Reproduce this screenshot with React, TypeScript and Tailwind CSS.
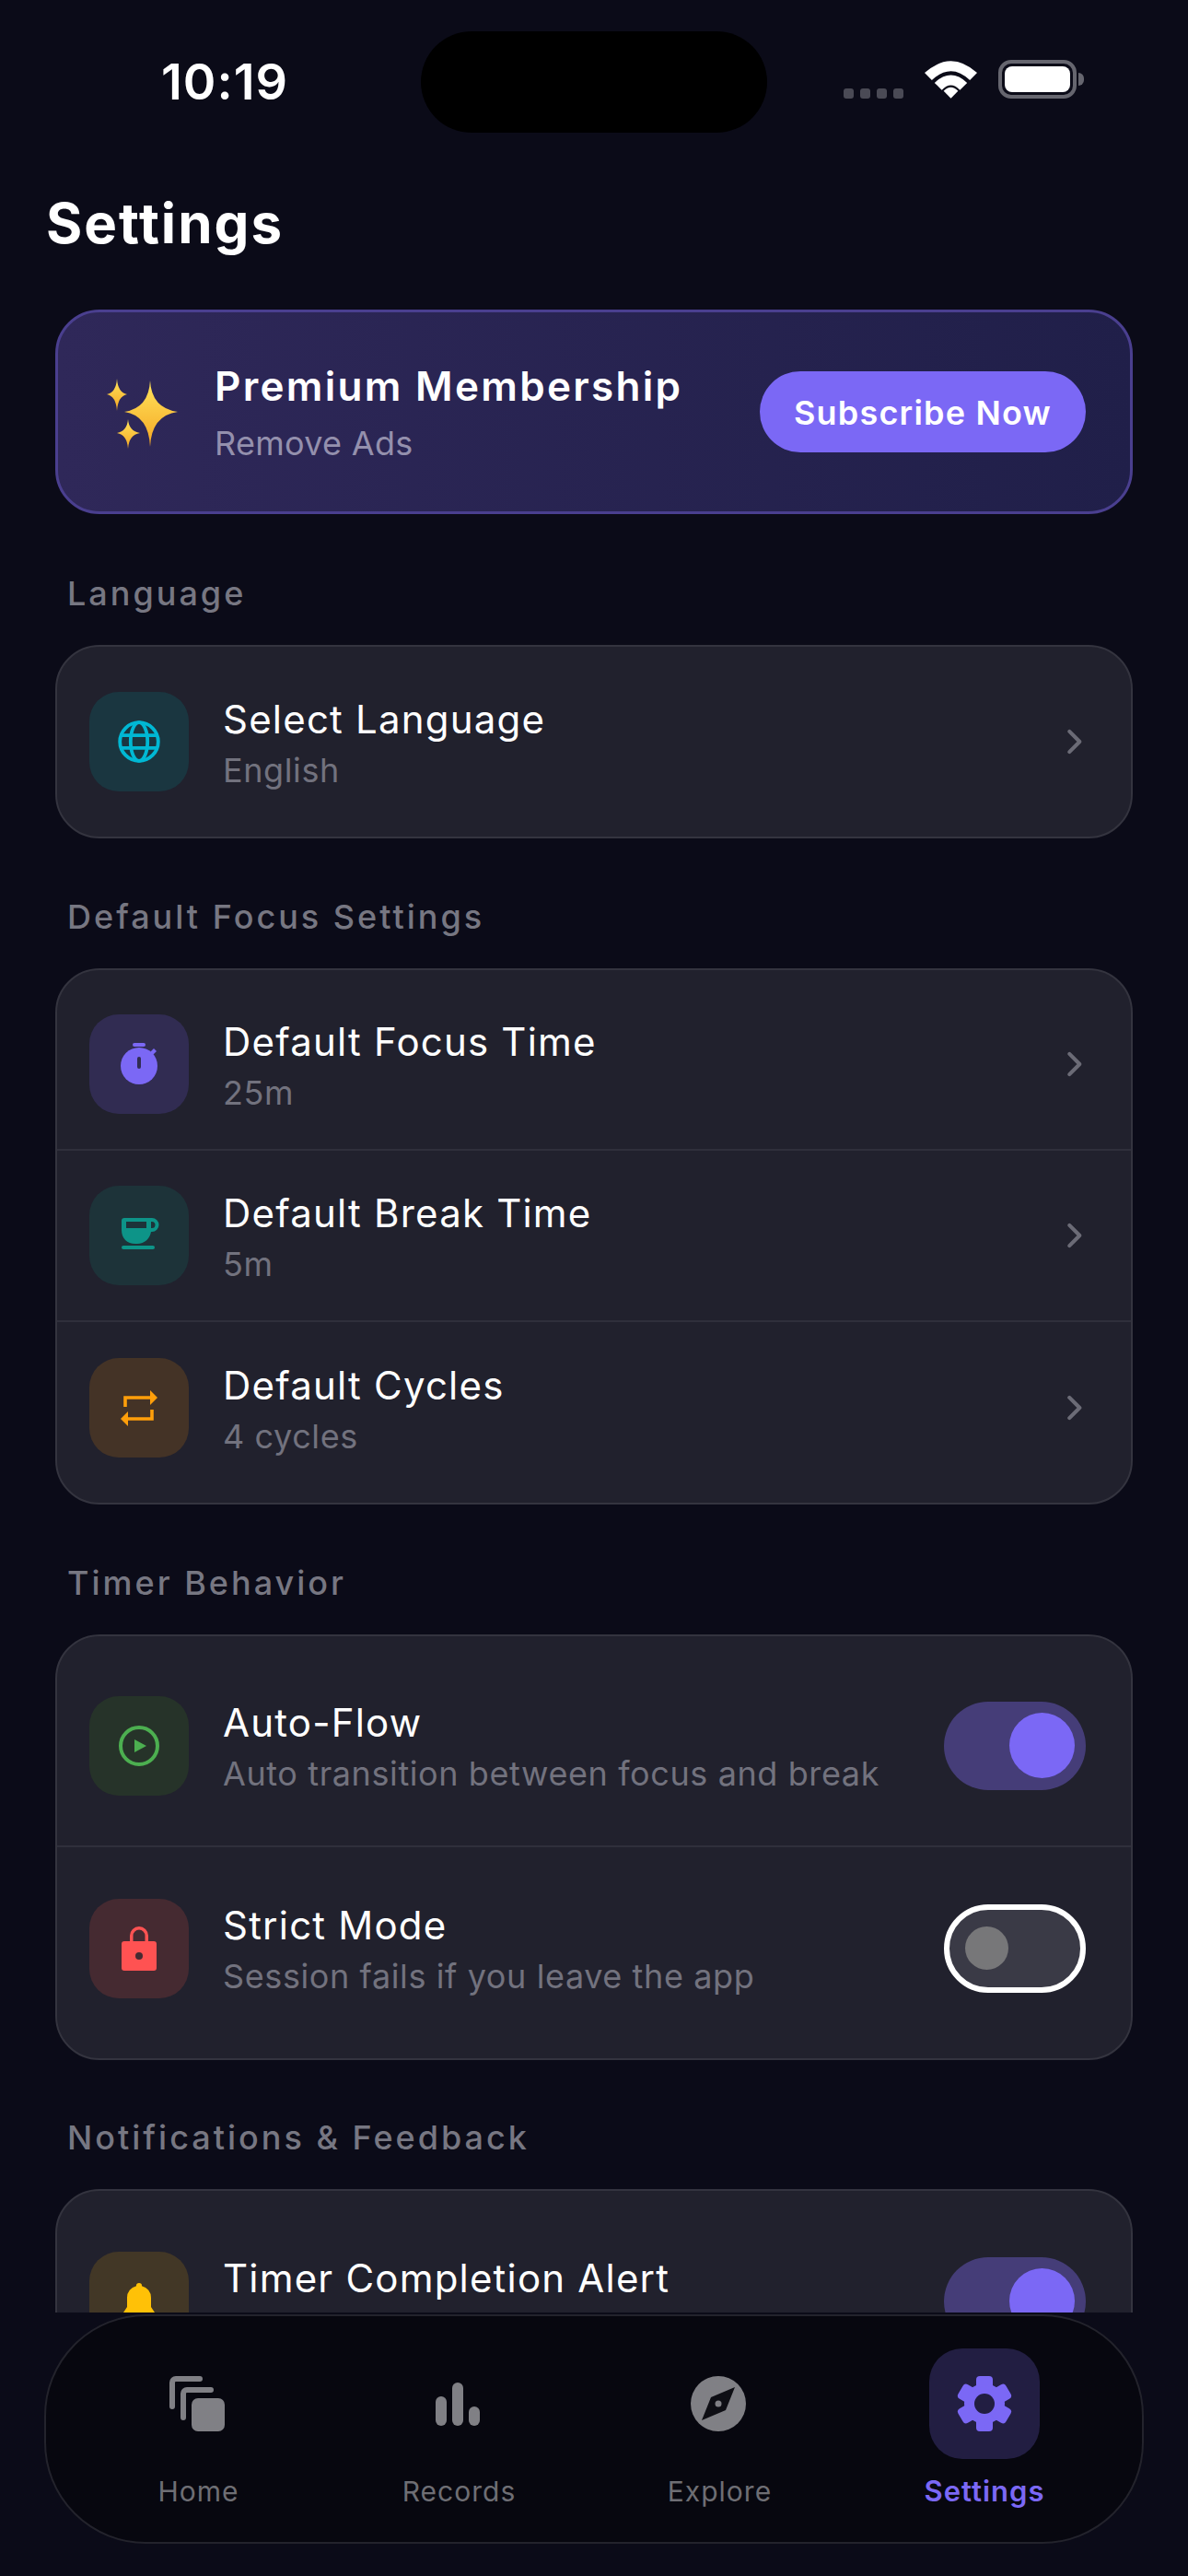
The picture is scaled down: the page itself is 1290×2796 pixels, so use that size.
const font = { fontFamily: 'Inter, "Noto Sans", sans-serif' };

function Globe() {
  return (
    <svg width="48" height="48" viewBox="0 0 24 24" fill="none" stroke="#00b8d4" strokeWidth="1.9">
      <circle cx="12" cy="12" r="10.4" />
      <ellipse cx="12" cy="12" rx="4.6" ry="10.4" />
      <path d="M2.5 8.6h19M2.5 15.4h19" />
    </svg>
  );
}

function Stopwatch() {
  return (
    <svg width="48" height="48" viewBox="0 0 48 48" fill="#7b68f5">
      <rect x="17" y="1" width="14" height="4" rx="2" />
      <circle cx="24" cy="26" r="20" />
      <path d="M36 11l4-4 3 3-4 4z" />
      <rect x="22" y="16" width="4" height="13" rx="2" fill="#312c52" />
    </svg>
  );
}

function Cup() {
  return (
    <svg width="48" height="48" viewBox="0 0 48 48" fill="#0d9488">
      <path fillRule="evenodd" d="M5 8a3 3 0 0 1 3-3H38a7.5 7.5 0 0 1 0 15H37C36 27 30 33 22 33H20C11 33 5 27 5 18zM10 9h22v7H10zM37 9v7h1a3.5 3.5 0 0 0 0-7z" />
      <rect x="5" y="35" width="36" height="4" rx="2" />
    </svg>
  );
}

function Repeat() {
  return (
    <svg width="48" height="48" viewBox="0 0 48 48" fill="none" stroke="#ff9f0a" strokeWidth="3.6">
      <path d="M9 23V13H38" />
      <path d="M36 5 44 13 36 21z" fill="#ff9f0a" stroke="none" />
      <path d="M38 26V36H10" />
      <path d="M12 28 4 36 12 44z" fill="#ff9f0a" stroke="none" />
    </svg>
  );
}

function PlayCircle() {
  return (
    <svg width="48" height="48" viewBox="0 0 24 24" fill="none">
      <circle cx="12" cy="12" r="10" stroke="#4caf50" strokeWidth="2" />
      <path d="M9.5 8.5l6.5 3.5-6.5 3.5z" fill="#4caf50" />
    </svg>
  );
}

function Lock() {
  return (
    <svg width="48" height="48" viewBox="0 0 48 48">
      <path d="M15.75 18V10a8.25 8.25 0 0 1 16.5 0v8" fill="none" stroke="#ff5252" strokeWidth="3.5" />
      <rect x="5" y="16" width="38" height="32" rx="3" fill="#ff5252" />
      <circle cx="24" cy="32" r="4" fill="#452a31" />
    </svg>
  );
}

function Bell() {
  return (
    <svg width="48" height="48" viewBox="0 0 24 24" fill="#ffc107">
      <path d="M12 2a1.5 1.5 0 0 1 1.5 1.6A6.5 6.5 0 0 1 18.5 10v5l2 3v1h-17v-1l2-3v-5a6.5 6.5 0 0 1 5-6.4A1.5 1.5 0 0 1 12 2z" />
      <path d="M9.5 20.5h5a2.5 2.5 0 0 1-5 0z" />
    </svg>
  );
}

function Chevron() {
  return (
    <svg width="38" height="38" viewBox="0 0 24 24" fill="none" stroke="#6b6b76" strokeWidth="2.6" strokeLinecap="round" strokeLinejoin="round" className="-mr-[6px] shrink-0">
      <path d="M9 5l7 7-7 7" />
    </svg>
  );
}

function Sparkles() {
  return (
    <svg width="78" height="78" viewBox="0 0 78 78" className="shrink-0 mt-[4px]">
      <defs>
        <linearGradient id="spark" x1="0" y1="0" x2="0" y2="1">
          <stop offset="0" stopColor="#ffe45c" />
          <stop offset="1" stopColor="#f5a623" />
        </linearGradient>
      </defs>
      <path d="M47 3 Q48.5 33 77 37 Q48.5 41 47 75 Q45.5 41 19 37 Q45.5 33 47 3z" fill="url(#spark)" />
      <path d="M11 1 Q12 16 22 18 Q12 20 11 36 Q10 20 0 18 Q10 16 11 1z" fill="url(#spark)" />
      <path d="M23 45 Q24 58 36 60 Q24 62 23 77 Q22 62 11 60 Q22 58 23 45z" fill="url(#spark)" />
    </svg>
  );
}

function Toggle({ on }: { on: boolean }) {
  if (on) {
    return (
      <div className="w-[154px] h-[96px] rounded-full bg-[#453d78] flex items-center justify-end pr-[12px] shrink-0">
        <div className="w-[71px] h-[71px] rounded-full bg-[#7b68f5]" />
      </div>
    );
  }
  return (
    <div className="w-[154px] h-[96px] rounded-full bg-[#3a3a46] border-[6px] border-white flex items-center pl-[17px] shrink-0">
      <div className="w-[47px] h-[47px] rounded-full bg-[#777779]" />
    </div>
  );
}

interface RowProps {
  icon: React.ReactNode;
  tile: string;
  title: string;
  sub?: string;
  tall?: boolean;
  divider?: boolean;
  right?: React.ReactNode;
}

function Row({ icon, tile, title, sub, tall, divider, right }: RowProps) {
  return (
    <div className={`flex items-center pl-[35px] pr-[49px] ${tall ? 'h-[219px]' : 'h-[186px]'} ${divider ? 'border-b-2 border-[#2f2f3b]' : ''}`}>
      <div className={`w-[108px] h-[108px] rounded-[32px] flex items-center justify-center shrink-0 ${tile}`}>{icon}</div>
      <div className="ml-[37px] pt-[5px] flex-1 min-w-0">
        <div className="text-[42px] leading-[56px] tracking-[1.2px] text-white">{title}</div>
        <div className="h-[54px] text-[36px] leading-[54px] tracking-[0.6px] text-[#72727e]">{sub}</div>
      </div>
      {right ?? <Chevron />}
    </div>
  );
}

function SectionLabel({ children }: { children: React.ReactNode }) {
  return <div className="pl-[13px] h-[48px] leading-[48px] text-[36px] font-medium tracking-[3px] text-[#777782]">{children}</div>;
}

function Card({ children }: { children: React.ReactNode }) {
  return <div className="rounded-[48px] bg-[#21212d] border-2 border-[#34343f] py-[10px]">{children}</div>;
}

export default function App() {
  return (
    <div className="w-[1290px] h-[2796px] bg-[#0b0b18] flex flex-col overflow-hidden" style={font}>
      <div className="h-[2510px] overflow-hidden shrink-0">
        {/* status bar */}
        <div className="h-[178px] flex items-start">
          <div className="w-[457px] pt-[54px] pl-[175px] text-[54px] leading-[70px] font-semibold tracking-[1px] text-white">10:19</div>
          <div className="mt-[34px] w-[376px] h-[110px] rounded-full bg-black" />
          <div className="flex-1 pt-[65px] pl-[83px] flex items-start">
            <div className="flex gap-[7px] mt-[31px]">
              <span className="w-[11px] h-[11px] rounded-[3px] bg-[#4a4a55]" />
              <span className="w-[11px] h-[11px] rounded-[3px] bg-[#4a4a55]" />
              <span className="w-[11px] h-[11px] rounded-[3px] bg-[#4a4a55]" />
              <span className="w-[11px] h-[11px] rounded-[3px] bg-[#4a4a55]" />
            </div>
            <svg width="57" height="42" viewBox="0 0 58 42" fill="white" className="ml-[23px]">
              <path d="M0 14 Q29 -12 58 14 L50 22 Q29 2 8 22z" />
              <path d="M11 25 Q29 8 47 25 L39 33 Q29 22 19 33z" />
              <path d="M21 34 Q29 26 37 34 L29 42z" />
            </svg>
            <div className="ml-[23px] flex items-center">
              <div className="w-[85px] h-[42px] rounded-[14px] border-[4px] border-[#66666f] p-[3px]">
                <div className="w-full h-full rounded-[8px] bg-white" />
              </div>
              <div className="w-[6px] h-[14px] rounded-r-full bg-[#66666f] ml-[2px]" />
            </div>
          </div>
        </div>

        <div className="h-[158px] pl-[50px] pt-[26px] text-[60px] leading-[76px] font-bold tracking-[2px] text-white">Settings</div>

        <div className="px-[60px]">
          {/* premium banner */}
          <div className="h-[222px] rounded-[48px] border-[3px] border-[#4a3f8f] bg-gradient-to-r from-[#2f2859] to-[#201f49] flex items-center pl-[53px] pr-[48px]">
            <Sparkles />
            <div className="ml-[39px] flex-1 mt-[8px]">
              <div className="text-[44px] leading-[60px] font-semibold tracking-[2.3px] text-white">Premium Membership</div>
              <div className="text-[36px] leading-[65px] tracking-[0.3px] text-[#9490ad]">Remove Ads</div>
            </div>
            <div className="w-[354px] h-[88px] pt-[2px] rounded-full bg-[#7b68f5] flex items-center justify-center text-[36px] font-semibold tracking-[1.2px] text-white">Subscribe Now</div>
          </div>

          <div className="mt-[62px]"><SectionLabel>Language</SectionLabel></div>
          <div className="mt-[32px]">
            <Card>
              <Row icon={<Globe />} tile="bg-[#1a3640]" title="Select Language" sub="English" />
            </Card>
          </div>

          <div className="mt-[61px]"><SectionLabel>Default Focus Settings</SectionLabel></div>
          <div className="mt-[32px]">
            <Card>
              <Row icon={<Stopwatch />} tile="bg-[#312c52]" title="Default Focus Time" sub="25m" divider />
              <Row icon={<Cup />} tile="bg-[#1d3339]" title="Default Break Time" sub="5m" divider />
              <Row icon={<Repeat />} tile="bg-[#443326]" title="Default Cycles" sub="4 cycles" />
            </Card>
          </div>

          <div className="mt-[61px]"><SectionLabel>Timer Behavior</SectionLabel></div>
          <div className="mt-[32px]">
            <Card>
              <Row tall divider icon={<PlayCircle />} tile="bg-[#263329]" title="Auto-Flow" sub="Auto transition between focus and break" right={<Toggle on />} />
              <Row tall icon={<Lock />} tile="bg-[#452a31]" title="Strict Mode" sub="Session fails if you leave the app" right={<Toggle on={false} />} />
            </Card>
          </div>

          <div className="mt-[60px]"><SectionLabel>Notifications &amp; Feedback</SectionLabel></div>
          <div className="mt-[32px]">
            <Card>
              <Row tall icon={<Bell />} tile="bg-[#423726]" title="Timer Completion Alert" right={<Toggle on />} />
            </Card>
          </div>
        </div>
      </div>

      {/* bottom nav */}
      <div className="px-[48px] pt-[2px]">
        <div className="h-[249px] rounded-[110px] bg-[#07070f] border-2 border-[#23232c] flex pl-[24px]">
          <NavItem label="Home" icon={<HomeIcon />} />
          <NavItem label="Records" icon={<RecordsIcon />} />
          <NavItem label="Explore" icon={<ExploreIcon />} />
          <div className="w-[292px] flex flex-col items-center pt-[35px]">
            <div className="w-[120px] h-[120px] rounded-[36px] bg-[#221e42] flex items-center justify-center"><GearIcon /></div>
            <div className="mt-[15px] text-[31px] leading-[40px] font-semibold tracking-[1px] text-[#7b68f5]">Settings</div>
          </div>
        </div>
      </div>
    </div>
  );
}

function NavItem({ label, icon }: { label: string; icon: React.ReactNode }) {
  return (
    <div className="w-[283px] flex flex-col items-center pt-[35px]">
      <div className="w-[120px] h-[120px] pr-[3px] flex items-center justify-center">{icon}</div>
      <div className="mt-[15px] text-[30px] leading-[40px] tracking-[1px] text-[#6e6e74]">{label}</div>
    </div>
  );
}

function HomeIcon() {
  return (
    <svg width="60" height="60" viewBox="0 0 60 60" fill="none" stroke="#808085" strokeWidth="6" strokeLinecap="round">
      <path d="M3 33V7a4 4 0 0 1 4-4h26" />
      <path d="M15 45V19a4 4 0 0 1 4-4h26" />
      <rect x="24" y="24" width="36" height="36" rx="7" fill="#808085" stroke="none" />
    </svg>
  );
}

function RecordsIcon() {
  return (
    <svg width="48" height="47" viewBox="0 0 48 47" fill="#808085">
      <rect x="0" y="15" width="12" height="32" rx="6" />
      <rect x="18" y="0" width="12" height="47" rx="6" />
      <rect x="36" y="26" width="12" height="21" rx="6" />
    </svg>
  );
}

function ExploreIcon() {
  return (
    <svg width="60" height="60" viewBox="0 0 60 60">
      <circle cx="30" cy="30" r="30" fill="#808085" />
      <path d="M48 12 38 37 12 48 22 23z" fill="#0e0e14" />
      <circle cx="30" cy="30" r="3.5" fill="#808085" />
    </svg>
  );
}

function GearIcon() {
  const teeth = [0, 60, 120, 180, 240, 300];
  return (
    <svg width="60" height="60" viewBox="0 0 60 60" fill="#7b68f5">
      <circle cx="30" cy="30" r="22" />
      {teeth.map(a => (
        <rect key={a} x="21" y="0" width="18" height="18" rx="4" transform={`rotate(${a} 30 30)`} />
      ))}
      <circle cx="30" cy="30" r="11" fill="#221e42" />
    </svg>
  );
}
